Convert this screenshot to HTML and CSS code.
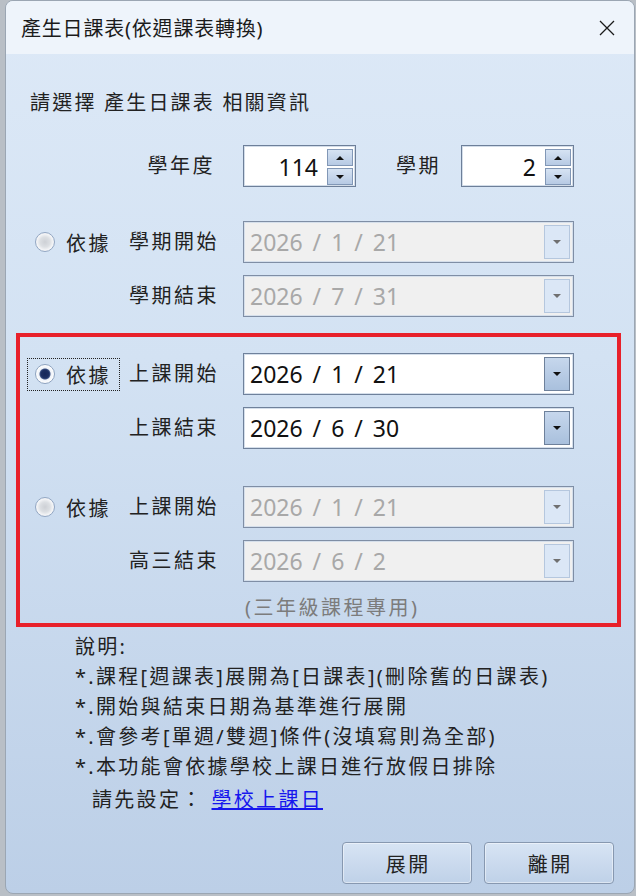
FILE: index.html
```html
<!DOCTYPE html>
<html lang="zh-Hant">
<head>
<meta charset="UTF-8" />
<meta name="viewport" content="width=device-width, initial-scale=1.0"/>
<title>產生日課表(依週課表轉換)</title>
<link rel="stylesheet" href="styles.css">
</head>
<body>
<div class="window">
    <div class="titlebar">
        <span class="title">產生日課表(依週課表轉換)</span>
        <svg class="close" width="16" height="16" viewBox="0 0 16 16">
            <path d="M1 1 L15 15 M15 1 L1 15" stroke="#1a1a1a" stroke-width="1.3" fill="none"/>
        </svg>
    </div>
    <div class="content">
        <p class="intro">請選擇 產生日課表 相關資訊</p>

        <div class="row term-row">
            <span class="radio-cell"></span>
            <span class="lbl lbl-right">學年度</span>
            <div class="spin">
                <span class="spin-val">114</span>
                <div class="spin-btns"><span class="spin-btn up"></span><span class="spin-btn down"></span></div>
            </div>
            <span class="lbl term-lbl">學期</span>
            <div class="spin">
                <span class="spin-val">2</span>
                <div class="spin-btns"><span class="spin-btn up"></span><span class="spin-btn down"></span></div>
            </div>
        </div>

        <div class="group">
            <div class="row">
                <label class="radio-cell"><span class="radio"></span><span class="radio-text">依據</span></label>
                <span class="lbl">學期開始</span>
                <div class="combo disabled"><span class="combo-val">2026 / 1 / 21</span><span class="drop"></span></div>
            </div>
            <div class="row">
                <span class="radio-cell"></span>
                <span class="lbl">學期結束</span>
                <div class="combo disabled"><span class="combo-val">2026 / 7 / 31</span><span class="drop"></span></div>
            </div>
        </div>

        <div class="highlight">
            <div class="row">
                <label class="radio-cell focused"><span class="radio checked"></span><span class="radio-text">依據</span></label>
                <span class="lbl">上課開始</span>
                <div class="combo"><span class="combo-val">2026 / 1 / 21</span><span class="drop"></span></div>
            </div>
            <div class="row">
                <span class="radio-cell"></span>
                <span class="lbl">上課結束</span>
                <div class="combo"><span class="combo-val">2026 / 6 / 30</span><span class="drop"></span></div>
            </div>

            <div class="row senior-first">
                <label class="radio-cell"><span class="radio"></span><span class="radio-text">依據</span></label>
                <span class="lbl">上課開始</span>
                <div class="combo disabled"><span class="combo-val">2026 / 1 / 21</span><span class="drop"></span></div>
            </div>
            <div class="row">
                <span class="radio-cell"></span>
                <span class="lbl">高三結束</span>
                <div class="combo disabled"><span class="combo-val">2026 / 6 / 2</span><span class="drop"></span></div>
            </div>
            <p class="hint">(三年級課程專用)</p>
        </div>

        <div class="notes">
            <p>說明:</p>
            <p>*.課程[週課表]展開為[日課表](刪除舊的日課表)</p>
            <p>*.開始與結束日期為基準進行展開</p>
            <p>*.會參考[單週/雙週]條件(沒填寫則為全部)</p>
            <p>*.本功能會依據學校上課日進行放假日排除</p>
            <p class="setup">請先設定：<a href="#" class="link">學校上課日</a></p>
        </div>

        <div class="actions">
            <button class="btn">展開</button>
            <button class="btn">離開</button>
        </div>
    </div>
</div>
</body>
</html>
```

FILE: styles.css
```css
body {
    margin: 0;
    background-color: #b9bfc6;
    font-family: "Noto Sans", "Noto Sans CJK TC", sans-serif;
    color: #222;
    overflow: hidden;
}
p { margin: 0; }

.window {
    margin-left: 5px;
    width: 630px;
    height: 894px;
    box-sizing: border-box;
    border: 1px solid #9ba6b3;
    border-radius: 8px;
    overflow: hidden;
    display: flex;
    flex-direction: column;
    background: linear-gradient(#dde9f7, #d3e2f3 40%, #bccfe7);
}

/* title bar */
.titlebar {
    height: 53px;
    flex: none;
    display: flex;
    align-items: center;
    justify-content: space-between;
    padding: 0 19px 0 15px;
    background-color: #eef4fb;
}
.title {
    font-size: 20px;
    letter-spacing: 0.8px;
    color: #1b1b1b;
}
.close { display: block; }

.content {
    padding-left: 10px;
    display: flex;
    flex-direction: column;
}
.intro {
    margin: 34px 0 0 14px;
    font-size: 20px;
    line-height: 30px;
    letter-spacing: 2.2px;
}

/* label rows */
.row {
    display: flex;
    align-items: center;
    height: 42px;
}
.row + .row { margin-top: 12px; }
.term-row { margin: 27px 0 0 11px; }
.radio-cell {
    width: 93px;
    height: 33px;
    flex: none;
    box-sizing: border-box;
    display: flex;
    align-items: center;
    padding-left: 7px;
    border: 1px solid transparent;
}
.radio-cell.focused { border: 1px dotted #222; }
.radio-text {
    margin-left: 11px;
    font-size: 20px;
    letter-spacing: 2.5px;
}
.lbl {
    margin-left: 9px;
    width: 114px;
    flex: none;
    font-size: 20px;
    line-height: 30px;
    letter-spacing: 2.5px;
}
.lbl-right {
    box-sizing: border-box;
    text-align: right;
    padding-right: 28px;
}
.term-lbl {
    width: auto;
    margin: 0 20px 0 40px;
}

/* radio buttons */
.radio {
    width: 20px;
    height: 20px;
    box-sizing: border-box;
    border-radius: 50%;
    border: 1.5px solid #93a7c3;
    background: radial-gradient(circle, #cdd0d5 0, #dcdfe3 5px, #f3f4f6 8px);
    flex: none;
}
.radio.checked {
    border-color: #8ea3bf;
    background: radial-gradient(circle, #15275a 0, #1c2f62 4px, #3b5184 5px, #eef2f8 6px, #fff 9px);
}

/* numeric up-down */
.spin {
    width: 113px;
    height: 42px;
    flex: none;
    box-sizing: border-box;
    display: flex;
    border: 1px solid #6d7f99;
    box-shadow: inset 0 0 0 1px #d3dde9;
    background-color: #fff;
    padding: 3px 2px 1px 0;
}
.spin-val {
    flex: 1;
    text-align: right;
    padding-right: 9px;
    font-size: 23px;
    line-height: 36px;
    color: #111;
}
.spin-btns {
    width: 26px;
    display: flex;
    flex-direction: column;
    gap: 2px;
}
.spin-btn {
    flex: 1;
    display: flex;
    align-items: center;
    justify-content: center;
    border: 1px solid #8197b6;
    background: linear-gradient(#d6e3f3, #b7cae4);
}
.spin-btn::after {
    content: "";
    border-left: 4px solid transparent;
    border-right: 4px solid transparent;
}
.up::after { border-bottom: 4px solid #111; }
.down::after { border-top: 4px solid #111; }

/* date combo boxes */
.combo {
    width: 331px;
    height: 42px;
    flex: none;
    box-sizing: border-box;
    display: flex;
    border: 1px solid #6f819b;
    box-shadow: inset 0 0 0 1px #d5dfeb;
    background-color: #fff;
    padding: 3px 3px 3px 0;
}
.combo-val {
    flex: 1;
    padding-left: 6px;
    font-size: 23px;
    line-height: 34px;
    word-spacing: 4px;
    color: #111;
}
.drop {
    width: 26px;
    box-sizing: border-box;
    display: flex;
    align-items: center;
    justify-content: center;
    border: 1px solid #6e819b;
    background: linear-gradient(#c6d7ed, #a9c0dd);
}
.drop::after {
    content: "";
    border-left: 4px solid transparent;
    border-right: 4px solid transparent;
    border-top: 4px solid #111;
}
.combo.disabled {
    background-color: #f0f0f0;
    border-color: #7f8ea5;
}
.combo.disabled .combo-val { color: #a8a8a8; }
.combo.disabled .drop {
    border-color: #b5c7de;
    background: #dbe7f6;
}
.combo.disabled .drop::after { border-top-color: #707070; }

.group {
    margin-top: 34px;
    padding-left: 11px;
}

/* red outlined block */
.highlight {
    margin-top: 16px;
    width: 605px;
    box-sizing: border-box;
    border: 4px solid #e8202a;
    padding: 16px 0 0 7px;
}
.row.senior-first { margin-top: 37px; }
.hint {
    margin-top: 11px;
    padding-left: 218px;
    font-size: 20px;
    line-height: 30px;
    letter-spacing: 2.5px;
    color: #7c7c7c;
}

/* explanation */
.notes {
    margin-top: 5px;
    padding-left: 59px;
    font-size: 20px;
    line-height: 30px;
    letter-spacing: 2.3px;
}
.setup {
    margin-top: 3px;
    padding-left: 17px;
}
.link {
    margin-left: 8px;
    color: #1616ee;
}

.actions {
    margin-top: 27px;
    display: flex;
    justify-content: flex-end;
    gap: 12px;
    padding-right: 20px;
}
.btn {
    width: 130px;
    height: 42px;
    border: 1px solid #8798b0;
    border-radius: 4px;
    background: linear-gradient(#d7e4f4, #bfd1e8);
    box-shadow: inset 0 0 0 1px rgba(255, 255, 255, 0.45);
    font-family: "Noto Sans", "Noto Sans CJK TC", sans-serif;
    font-size: 20px;
    letter-spacing: 2.5px;
    padding: 0 0 0 2.5px;
    color: #222;
}
```
